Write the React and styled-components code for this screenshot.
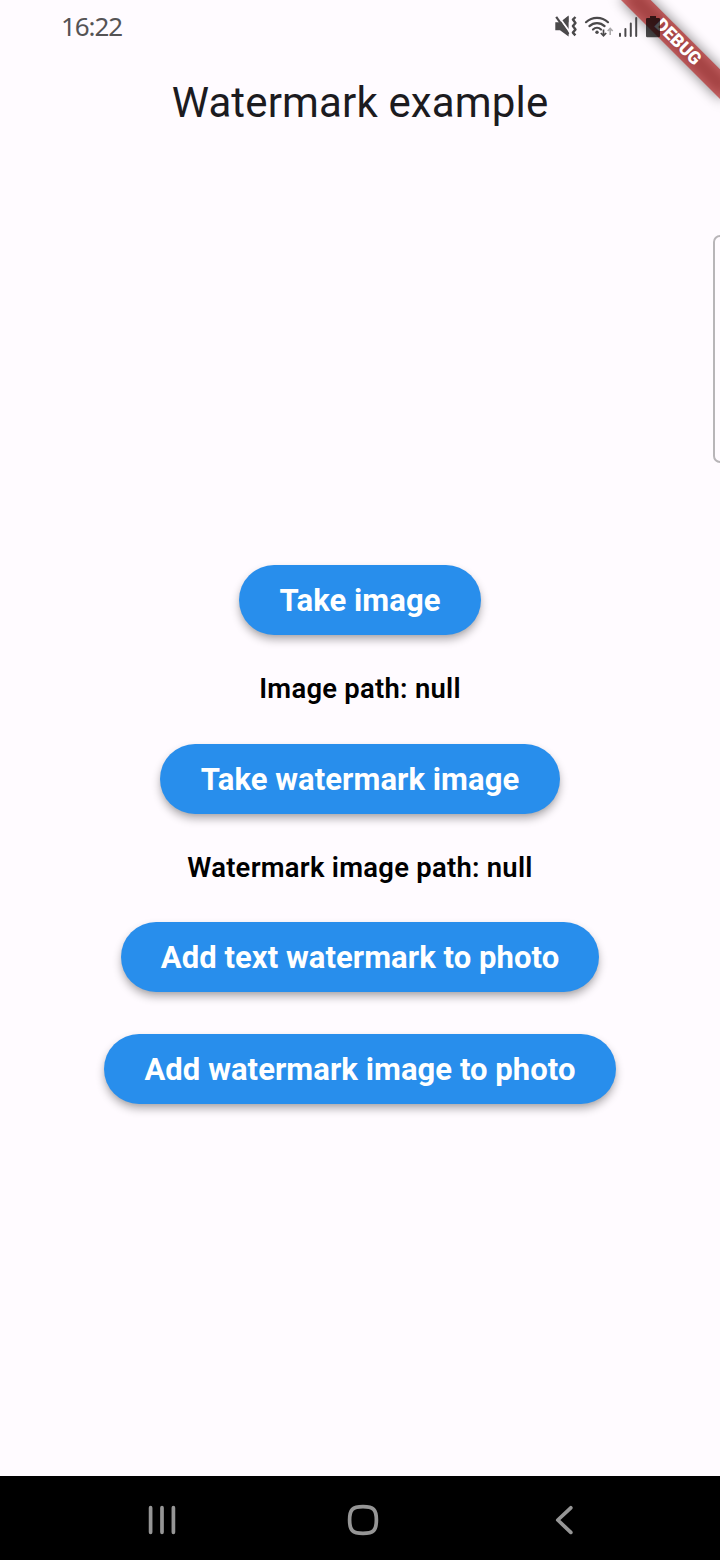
import React from "react";
import styled, { createGlobalStyle } from "styled-components";

const GlobalStyle = createGlobalStyle`
  body { margin: 0; background: #fffbff; }
  * { box-sizing: border-box; }
`;

const Screen = styled.div`
  position: relative;
  display: flex;
  flex-direction: column;
  width: 720px;
  height: 1560px;
  overflow: hidden;
  background: #fffbff;
  font-family: Roboto, sans-serif;
`;

const StatusBar = styled.header`
  position: relative;
  z-index: 2;
  display: flex;
  align-items: flex-start;
  justify-content: space-between;
  height: 53px;
  padding: 8px 50px 0 61px;
`;

const Clock = styled.time`
  font-family: "Noto Sans", sans-serif;
  font-size: 26px;
  font-weight: 370;
  line-height: 36px;
  letter-spacing: -1.1px;
  color: #555355;
`;

const AppBar = styled.div`
  display: flex;
  align-items: center;
  justify-content: center;
  height: 98px;
`;

const Title = styled.h1`
  margin: 0;
  font-size: 42px;
  font-weight: 400;
  line-height: 53px;
  letter-spacing: 0.15px;
  color: #1c1b1f;
`;

const Content = styled.main`
  flex: 1;
  display: flex;
  flex-direction: column;
  align-items: center;
  padding-top: 414px;
`;

const PillButton = styled.button`
  height: 70px;
  padding: 1px 40.25px 0;
  border: 0;
  border-radius: 35px;
  background: #288eec;
  box-shadow: 0 5px 8px rgba(0, 0, 0, 0.29), 0 2px 3px rgba(0, 0, 0, 0.05);
  color: #fff;
  font: 700 31px/37px Roboto, sans-serif;
  letter-spacing: 0.06px;
  white-space: nowrap;

  & + & { margin-top: 42px; }
`;

const PathLabel = styled.p`
  display: flex;
  align-items: center;
  height: 108.5px;
  margin: 0;
  padding-top: 0.8px;
  font-size: 27.4px;
  font-weight: 600;
  line-height: 33px;
  letter-spacing: 0.28px;
  color: #000;
  white-space: nowrap;
`;

const NavBar = styled.nav`
  display: flex;
  align-items: center;
  justify-content: space-between;
  height: 84px;
  padding: 4px 138px 0 144px;
  background: #000;
`;

const NavIcon = styled.svg`
  display: block;
  width: 36px;
  height: 36px;
  fill: none;
  stroke: #969696;
  stroke-width: 3.7;
  stroke-linecap: round;
  stroke-linejoin: round;
`;

const EdgeHandle = styled.div`
  position: absolute;
  top: 235px;
  right: -10px;
  width: 17px;
  height: 228px;
  border: 2px solid #b8b5b8;
  border-radius: 7px;
`;

const Banner = styled.div`
  position: absolute;
  z-index: 1;
  top: 0;
  left: 720px;
  width: 0;
  height: 0;
  transform: rotate(45deg);

  &::before {
    content: "";
    position: absolute;
    left: -70px;
    top: 49px;
    width: 140px;
    height: 21px;
    background: rgba(0, 0, 0, 0.5);
    filter: blur(6.5px);
  }
`;

const BannerText = styled.div`
  position: absolute;
  left: -70px;
  top: 49px;
  width: 140px;
  height: 21px;
  background: rgba(183, 28, 28, 0.627);
  color: #fff;
  font-size: 17.85px;
  font-weight: 900;
  line-height: 20px;
  text-align: center;
`;

function StatusIcons() {
  return (
    <svg width="120" height="36" viewBox="550 8 120 36" fill="none">
      <g fill="#4b494b">
        <path d="M555.3 22.3h4.7l8.6-6.8v20.9l-8.6-6.2h-4.7z" />
        <path d="M564.5 19.5l4-3.2v6.2z" />
      </g>
      <path d="M558 15.8l13 17.8" stroke="#fffbff" strokeWidth="1.8" />
      <path d="M556.2 16.8l12.2 17.4" stroke="#4b494b" strokeWidth="2.2" />
      <path
        d="M575.5 17l-2.6 2.6 2.6 3.3-2.6 3.2 2.6 3.3-2.6 3.2 2.5 2.8"
        stroke="#4b494b"
        strokeWidth="2.4"
        strokeLinejoin="round"
      />
      <g stroke="#4b494b" strokeWidth="2.2" strokeLinecap="round">
        <path d="M586 22.2a16 16 0 0 1 22 0" />
        <path d="M589.4 26.1a11 11 0 0 1 15.2 0" />
        <path d="M593 29.5a6 6 0 0 1 8 0" />
      </g>
      <circle cx="597" cy="32.2" r="1.7" fill="#4b494b" />
      <path d="M603.5 29.5v6M600.8 33l2.7 2.8 2.7-2.8" stroke="#4b494b" strokeWidth="1.7" />
      <path d="M610.2 35v-6.2M607.7 31l2.5-2.6 2.5 2.6" stroke="#aaa8aa" strokeWidth="1.6" />
      <g stroke="#4b494b" strokeWidth="2" strokeLinecap="round">
        <path d="M620 33.8v2.2M625.4 29v7M630.8 23.5v12.5M636.2 18v18" />
      </g>
      <path
        d="M650 15.9h6v2h2.8q1.2 0 1.2 1.2V36q0 1.2-1.2 1.2h-11.6q-1.2 0-1.2-1.2V19.1q0-1.2 1.2-1.2h2.8z"
        fill="#000"
        fillOpacity="0.7"
      />
    </svg>
  );
}

export default function App() {
  return (
    <>
      <GlobalStyle />
      <Screen>
        <StatusBar>
          <Clock>16:22</Clock>
          <StatusIcons />
        </StatusBar>
        <AppBar>
          <Title>Watermark example</Title>
        </AppBar>
        <Content>
          <PillButton>Take image</PillButton>
          <PathLabel>Image path: null</PathLabel>
          <PillButton>Take watermark image</PillButton>
          <PathLabel>Watermark image path: null</PathLabel>
          <PillButton>Add text watermark to photo</PillButton>
          <PillButton>Add watermark image to photo</PillButton>
        </Content>
        <NavBar>
          <NavIcon viewBox="0 0 36 36">
            <path d="M6.6 5.7v24.6M18 5.7v24.6M29.4 5.7v24.6" />
          </NavIcon>
          <NavIcon viewBox="0 0 36 36">
            <path d="M18 4.6C28.5 4.6 31.4 7.5 31.4 18S28.5 31.4 18 31.4 4.6 28.5 4.6 18 7.5 4.6 18 4.6z" />
          </NavIcon>
          <NavIcon viewBox="0 0 36 36">
            <path d="M24.8 5.8L11.8 18l13 12.4" />
          </NavIcon>
        </NavBar>
        <EdgeHandle />
        <Banner>
          <BannerText>DEBUG</BannerText>
        </Banner>
      </Screen>
    </>
  );
}
